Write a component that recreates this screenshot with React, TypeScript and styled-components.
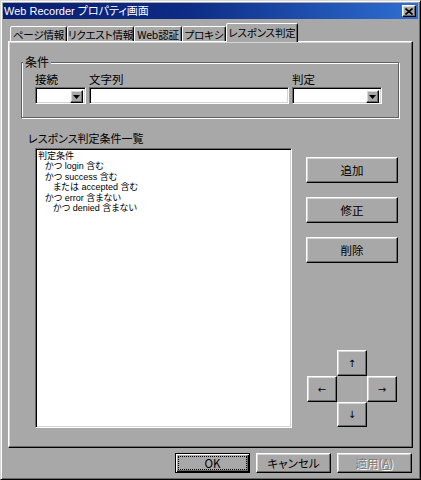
import React from 'react'
import styled, { createGlobalStyle, css } from 'styled-components'

const face = '#a8a8a8'
const shadow = '#6a6a6a'

const GlobalStyle = createGlobalStyle`
  html, body {
    margin: 0;
    padding: 0;
    background: ${face};
  }
  body {
    font-family: "Noto Sans CJK JP", "Liberation Sans", sans-serif;
    font-size: 12px;
    color: #000;
    font-feature-settings: "palt";
  }
  * {
    box-sizing: border-box;
  }
`

const raised = css`
  background: ${face};
  border: 1px solid;
  border-color: #fff #000 #000 #fff;
  box-shadow: inset -1px -1px 0 ${shadow}, inset 1px 1px 0 #d6d6d6;
`

const sunken = css`
  background: #fff;
  border: 1px solid;
  border-color: ${shadow} #fff #fff ${shadow};
  box-shadow: inset 1px 1px 0 #000, inset -1px -1px 0 #d4d4d4;
`

const Window = styled.div`
  width: 421px;
  height: 480px;
  background: ${face};
  border: 1px solid;
  border-color: #d8d8d8 #000 #000 #d8d8d8;
  box-shadow: inset 1px 1px 0 #fff, inset -1px -1px 0 ${shadow};
  padding: 2px;
  display: flex;
  flex-direction: column;
`

const TitleBar = styled.div`
  height: 16px;
  display: flex;
  align-items: center;
  justify-content: space-between;
  padding: 0 2px 0 1px;
  background: linear-gradient(90deg, #0a1f72 0%, #0d2c86 45%, #2e6fd2 100%);
  color: #fff;
  font-family: "Liberation Sans", "Noto Sans CJK JP", sans-serif;
  font-size: 11px;
  line-height: 14px;
  white-space: nowrap;
`

const CloseButton = styled.div`
  ${raised};
  width: 14px;
  height: 12px;
  display: flex;
  align-items: center;
  justify-content: center;
`

const Body = styled.div`
  padding: 0 5px;
  display: flex;
  flex-direction: column;
`

const TabStrip = styled.div`
  margin-top: 4px;
  height: 18px;
  padding-left: 2px;
  display: flex;
  align-items: flex-end;
`

const Tab = styled.div<{ $w: number; $active?: boolean }>`
  width: ${p => p.$w}px;
  height: ${p => (p.$active ? 19 : 15)}px;
  margin-bottom: ${p => (p.$active ? -1 : 0)}px;
  position: relative;
  z-index: ${p => (p.$active ? 1 : 0)};
  background: ${face};
  border: 1px solid;
  border-bottom: none;
  border-color: #fff #000 transparent #fff;
  border-radius: 2px 2px 0 0;
  box-shadow: inset -1px 0 0 ${shadow};
  display: flex;
  align-items: ${p => (p.$active ? 'flex-start' : 'center')};
  padding-top: ${p => (p.$active ? 2 : 0)}px;
  justify-content: center;
  font-size: 10.5px;
  letter-spacing: -0.2px;
  line-height: 13px;
  white-space: nowrap;
`

const Panel = styled.div`
  width: 405px;
  height: 407px;
  border: 1px solid;
  border-color: #fff #000 #000 #fff;
  box-shadow: inset -1px -1px 0 ${shadow}, inset 1px 1px 0 #d6d6d6;
  padding: 14px 0 0 12px;
  display: flex;
  flex-direction: column;
`

const GroupBox = styled.fieldset`
  width: 378px;
  height: 62px;
  margin: 0;
  padding: 4px 0 0 0;
  min-width: 0;
  border: 1px solid #606060;
  box-shadow: inset 1px 1px 0 #fff, 1px 1px 0 #fff;
`

const Legend = styled.legend`
  margin-left: 1px;
  padding: 0 2px;
  font-size: 12px;
  line-height: 12px;
  background: ${face};
`

const FieldGrid = styled.div`
  margin-left: 13px;
  display: grid;
  grid-template-columns: 51px 200px 90px;
  grid-template-rows: 14px 17px;
  column-gap: 3px;
  row-gap: 1px;
`

const FieldLabel = styled.div`
  font-size: 11.5px;
  line-height: 14px;
`

const Combo = styled.div`
  ${sunken};
  display: flex;
  justify-content: flex-end;
  padding: 2px;
`

const TextField = styled.div`
  ${sunken};
`

const DropButton = styled.div`
  ${raised};
  width: 13px;
  height: 13px;
  display: flex;
  align-items: center;
  justify-content: center;
`

const ListLabel = styled.div`
  margin: 13px 0 0 7px;
  font-size: 11px;
  line-height: 14px;
`

const ListRow = styled.div`
  margin: 3px 0 0 14px;
  display: flex;
  align-items: flex-start;
`

const ListBox = styled.div`
  ${sunken};
  width: 257px;
  height: 280px;
  padding: 2px 0 0 2px;
  font-family: "Liberation Sans", "Noto Sans CJK JP", sans-serif;
  font-size: 9px;
  line-height: 10.4px;
`

const ListItem = styled.div<{ $level: number }>`
  height: 10.4px;
  padding-left: ${p => [0, 7, 15][p.$level]}px;
  white-space: nowrap;
`

const SideColumn = styled.div`
  margin: 9px 0 0 14px;
  width: 92px;
  display: flex;
  flex-direction: column;
`

const SideButtons = styled.div`
  display: flex;
  flex-direction: column;
  gap: 14px;
`

const PushButton = styled.div`
  ${raised};
  height: 26px;
  display: flex;
  align-items: center;
  justify-content: center;
  font-size: 11.5px;
`

const ArrowPad = styled.div`
  margin: 87px 0 0 1px;
  display: grid;
  grid-template-columns: 30px 30px 30px;
  grid-template-rows: 26px 26px 25px;
  grid-template-areas:
    ". up ."
    "left . right"
    ". down .";
`

const ArrowButton = styled.div<{ $area: string }>`
  ${raised};
  grid-area: ${p => p.$area};
  display: flex;
  align-items: center;
  justify-content: center;
  font-family: "DejaVu Sans", sans-serif;
  font-size: 10px;
`

const Footer = styled.div`
  margin-top: 5px;
  padding-right: 1px;
  display: flex;
  justify-content: flex-end;
  gap: 6px;
`

const DialogButton = styled.div<{ $default?: boolean; $disabled?: boolean }>`
  ${raised};
  width: 75px;
  height: 20px;
  display: flex;
  align-items: center;
  justify-content: center;
  font-size: 11.5px;
  ${p =>
    p.$default &&
    css`
      border-color: #000;
      box-shadow: inset 1px 1px 0 #fff, inset -1px -1px 0 #000, inset -2px -2px 0 ${shadow};
      padding: 2px;
    `}
  ${p =>
    p.$disabled &&
    css`
      color: #7c7c7c;
      text-shadow: 1px 1px 0 #fff;
    `}
`

const FocusRect = styled.div`
  width: 100%;
  height: 100%;
  border: 1px dotted #000;
  display: flex;
  align-items: center;
  justify-content: center;
`

const DownTriangle = () => (
  <svg width="7" height="4" viewBox="0 0 7 4">
    <path d="M0 0h7L3.5 4z" fill="#000" />
  </svg>
)

const CloseIcon = () => (
  <svg width="8" height="7" viewBox="0 0 8 7">
    <path d="M0.5 0.5l7 6M7.5 0.5l-7 6" stroke="#000" strokeWidth="1.6" />
  </svg>
)

const tabs = [
  { label: 'ページ情報', w: 57 },
  { label: 'リクエスト情報', w: 67 },
  { label: 'Web認証', w: 48 },
  { label: 'プロキシ', w: 44 },
  { label: 'レスポンス判定', w: 72, active: true },
]

const conditions = [
  { text: '判定条件', level: 0 },
  { text: 'かつ login 含む', level: 1 },
  { text: 'かつ success 含む', level: 1 },
  { text: 'または accepted 含む', level: 2 },
  { text: 'かつ error 含まない', level: 1 },
  { text: 'かつ denied 含まない', level: 2 },
]

export default function App() {
  return (
    <>
      <GlobalStyle />
      <Window>
        <TitleBar>
          <span>Web Recorder プロパティ画面</span>
          <CloseButton>
            <CloseIcon />
          </CloseButton>
        </TitleBar>
        <Body>
          <TabStrip>
            {tabs.map(t => (
              <Tab key={t.label} $w={t.w} $active={t.active}>
                {t.label}
              </Tab>
            ))}
          </TabStrip>
          <Panel>
            <GroupBox>
              <Legend>条件</Legend>
              <FieldGrid>
                <FieldLabel>接続</FieldLabel>
                <FieldLabel>文字列</FieldLabel>
                <FieldLabel>判定</FieldLabel>
                <Combo>
                  <DropButton>
                    <DownTriangle />
                  </DropButton>
                </Combo>
                <TextField />
                <Combo>
                  <DropButton>
                    <DownTriangle />
                  </DropButton>
                </Combo>
              </FieldGrid>
            </GroupBox>
            <ListLabel>レスポンス判定条件一覧</ListLabel>
            <ListRow>
              <ListBox>
                {conditions.map((c, i) => (
                  <ListItem key={i} $level={c.level}>
                    {c.text}
                  </ListItem>
                ))}
              </ListBox>
              <SideColumn>
                <SideButtons>
                  <PushButton>追加</PushButton>
                  <PushButton>修正</PushButton>
                  <PushButton>削除</PushButton>
                </SideButtons>
                <ArrowPad>
                  <ArrowButton $area="up">↑</ArrowButton>
                  <ArrowButton $area="left">←</ArrowButton>
                  <ArrowButton $area="right">→</ArrowButton>
                  <ArrowButton $area="down">↓</ArrowButton>
                </ArrowPad>
              </SideColumn>
            </ListRow>
          </Panel>
          <Footer>
            <DialogButton $default>
              <FocusRect>OK</FocusRect>
            </DialogButton>
            <DialogButton>キャンセル</DialogButton>
            <DialogButton $disabled>
              適用(<u>A</u>)
            </DialogButton>
          </Footer>
        </Body>
      </Window>
    </>
  )
}
